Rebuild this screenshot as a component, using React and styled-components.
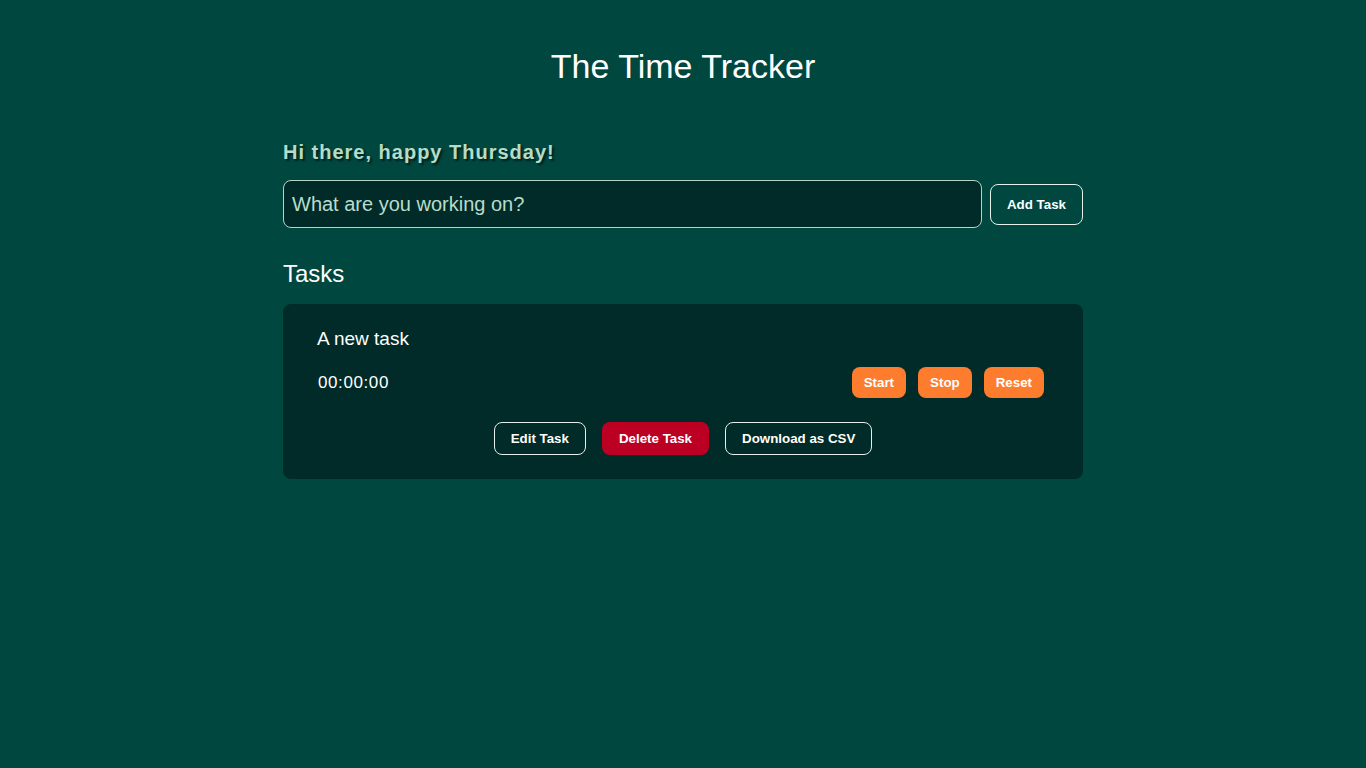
import React, { useState } from 'react';
import styled, { createGlobalStyle } from 'styled-components';

const GlobalStyle = createGlobalStyle`
  html, body {
    margin: 0;
    padding: 0;
    background: #004740;
    font-family: "Liberation Sans", Arial, sans-serif;
    color: #ffffff;
  }
`;

const Page = styled.div`
  min-height: 100vh;
  display: flex;
  flex-direction: column;
  align-items: center;
`;

const Title = styled.h1`
  margin: 46px 0 0;
  font-size: 34px;
  font-weight: 400;
  line-height: 40px;
`;

const Main = styled.main`
  width: 800px;
  margin-top: 54px;
`;

const Greeting = styled.h2`
  margin: 0;
  font-size: 20px;
  font-weight: 700;
  line-height: 24px;
  letter-spacing: 1px;
  color: #b5dcc6;
  text-shadow: 2px 2px 2px #00201c;
`;

const AddRow = styled.form`
  display: flex;
  align-items: center;
  gap: 8px;
  margin-top: 16px;
`;

const TaskInput = styled.input`
  flex: 1;
  height: 48px;
  box-sizing: border-box;
  padding: 0 8px;
  border: 1px solid #b7d3c4;
  border-radius: 8px;
  background: #002b28;
  color: #cfe8dc;
  font-family: inherit;
  font-size: 20px;
  outline: none;
  &::placeholder {
    color: #b9dccb;
  }
`;

const Button = styled.button`
  height: ${({ $h }) => $h || 33}px;
  padding: 0 ${({ $px }) => $px || 16}px;
  box-sizing: border-box;
  border-radius: 8px;
  font-family: inherit;
  font-size: 13.33px;
  font-weight: 700;
  color: #ffffff;
  cursor: pointer;
  border: 1px solid ${({ $variant }) =>
    $variant === 'outline' ? '#e6efe9' : 'transparent'};
  background: ${({ $variant }) =>
    $variant === 'danger'
      ? '#bb0024'
      : $variant === 'accent'
      ? '#fe7c2e'
      : 'transparent'};
`;

const SectionTitle = styled.h3`
  margin: 32px 0 0;
  font-size: 24px;
  font-weight: 400;
  line-height: 28px;
`;

const Card = styled.section`
  margin-top: 16px;
  background: #002b28;
  border-radius: 8px;
  padding: 23px 39px 24px 34px;
`;

const TaskName = styled.div`
  font-size: 19px;
  line-height: 24px;
`;

const TimerRow = styled.div`
  display: flex;
  align-items: center;
  justify-content: space-between;
  margin-top: 16px;
  padding-left: 1px;
`;

const Timer = styled.div`
  font-size: 17px;
  letter-spacing: 0.6px;
`;

const ButtonGroup = styled.div`
  display: flex;
  gap: ${({ $gap }) => $gap}px;
  justify-content: ${({ $center }) => ($center ? 'center' : 'flex-end')};
`;

const Footer = styled(ButtonGroup)`
  margin-top: 24px;
  padding-left: 5px;
`;

const App = () => {
  const [text, setText] = useState('');

  return (
    <>
      <GlobalStyle />
      <Page>
        <Title>The Time Tracker</Title>
        <Main>
          <Greeting>Hi there, happy Thursday!</Greeting>
          <AddRow onSubmit={(e) => e.preventDefault()}>
            <TaskInput
              value={text}
              onChange={(e) => setText(e.target.value)}
              placeholder="What are you working on?"
            />
            <Button type="submit" $variant="outline" $h={41} $px={16}>
              Add Task
            </Button>
          </AddRow>
          <SectionTitle>Tasks</SectionTitle>
          <Card>
            <TaskName>A new task</TaskName>
            <TimerRow>
              <Timer>00:00:00</Timer>
              <ButtonGroup $gap={12}>
                <Button $variant="accent" $h={31} $px={11}>Start</Button>
                <Button $variant="accent" $h={31} $px={11}>Stop</Button>
                <Button $variant="accent" $h={31} $px={11}>Reset</Button>
              </ButtonGroup>
            </TimerRow>
            <Footer $gap={16} $center>
              <Button $variant="outline">Edit Task</Button>
              <Button $variant="danger">Delete Task</Button>
              <Button $variant="outline">Download as CSV</Button>
            </Footer>
          </Card>
        </Main>
      </Page>
    </>
  );
};

export default App;
